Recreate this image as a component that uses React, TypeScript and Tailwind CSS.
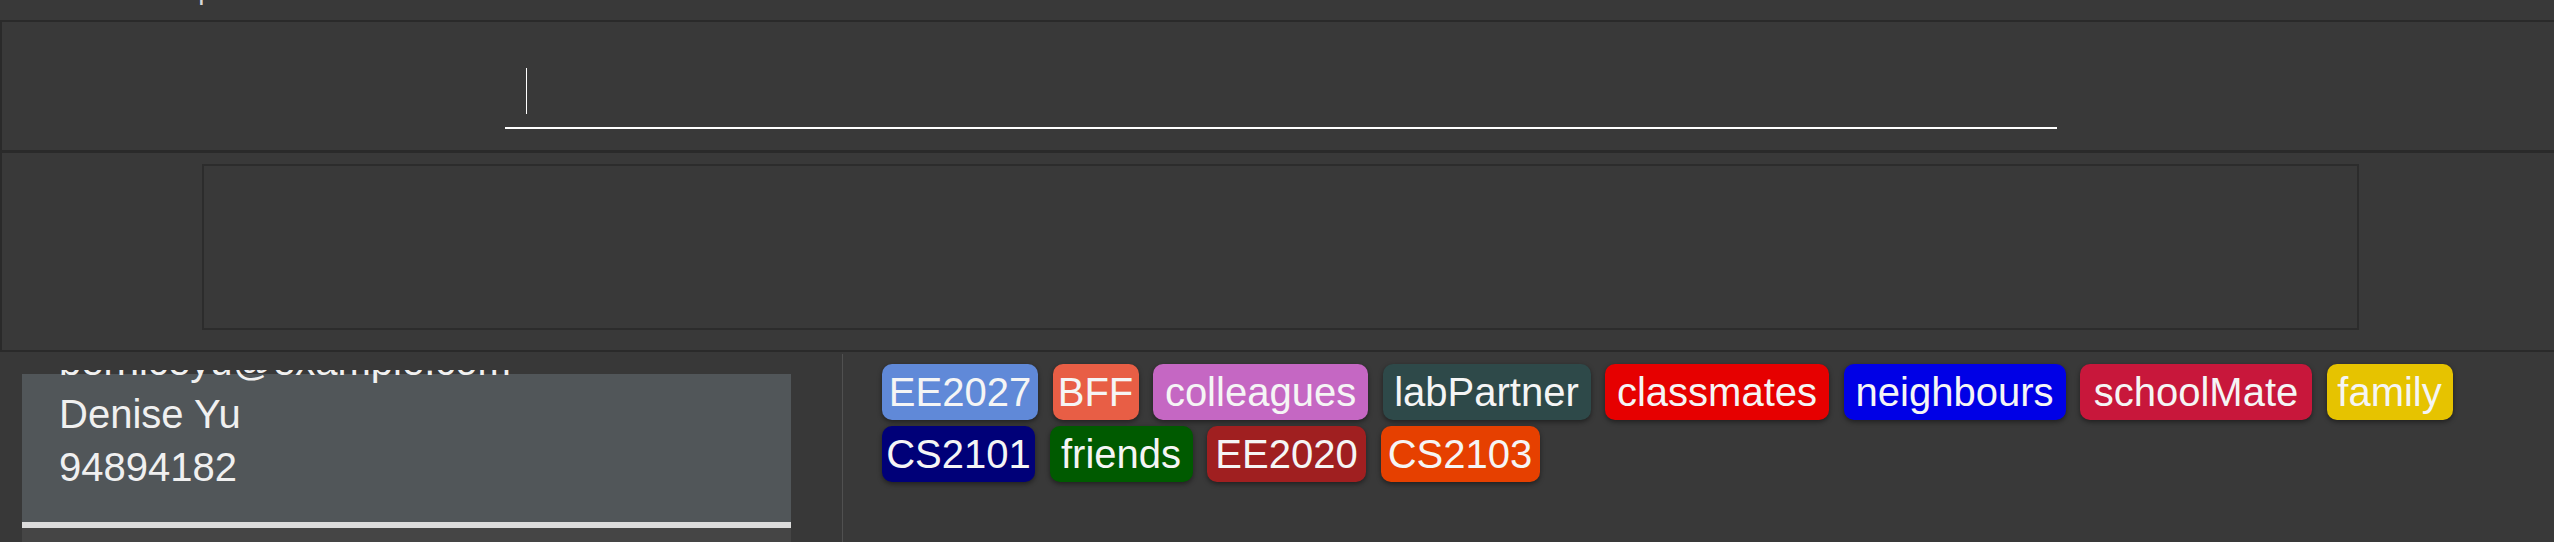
import React from 'react'

interface Tag {
  name: string
  className: string
}

const row1: Tag[] = [
  { name: 'EE2027', className: 'w-[156px] bg-[#6089d8]' },
  { name: 'BFF', className: 'w-[86px] bg-[#e85e45]' },
  { name: 'colleagues', className: 'w-[215px] bg-[#c567c3]' },
  { name: 'labPartner', className: 'w-[208px] bg-[#2e4949]' },
  { name: 'classmates', className: 'w-[224px] bg-[#e60000]' },
  { name: 'neighbours', className: 'w-[222px] bg-[#0000e6]' },
  { name: 'schoolMate', className: 'w-[232px] bg-[#c8173b]' },
  { name: 'family', className: 'w-[126px] bg-[#e6c300]' },
]

const row2: Tag[] = [
  { name: 'CS2101', className: 'w-[153px] bg-[#000078]' },
  { name: 'friends', className: 'w-[143px] bg-[#005a00]' },
  { name: 'EE2020', className: 'w-[159px] bg-[#a01f20]' },
  { name: 'CS2103', className: 'w-[159px] bg-[#e64000]' },
]

function TagChip({ tag }: { tag: Tag }) {
  return (
    <div
      className={`${tag.className} h-[56px] rounded-[10px] flex items-center justify-center text-[40px] leading-none text-[#f5f5f5] shadow-[0_2px_5px_rgba(0,0,0,0.45)]`}
    >
      {tag.name}
    </div>
  )
}

export default function App() {
  return (
    <div className="w-[2554px] h-[542px] bg-[#393939] flex flex-col overflow-hidden font-['Liberation_Sans',Arial,sans-serif]">
      {/* menu bar, scrolled mostly out of view */}
      <div className="h-[20px] overflow-hidden text-[28px] leading-[28px] text-[#d8d8d8]">
        <div className="-mt-[24px] flex">
          <span className="ml-[58px]">File</span>
          <span className="ml-[53px]">Help</span>
        </div>
      </div>
      <div className="h-[2px] bg-[#2a2a2a]" />

      {/* command box */}
      <div className="h-[128px] border-l-2 border-[#2a2a2a] pt-[46px] pl-[503px] flex flex-col">
        <div className="ml-[21px] w-[1px] h-[46px] bg-white" />
        <div className="mt-[13px] w-[1552px] h-[2px] bg-white" />
      </div>
      <div className="h-[3px] bg-[#2a2a2a]" />

      {/* result display */}
      <div className="h-[197px] border-l-2 border-[#2a2a2a] pt-[11px] pl-[200px]">
        <div className="w-[2157px] h-[166px] border-2 border-[#2c2c2c] bg-[#393939]" />
      </div>
      <div className="h-[2px] bg-[#2a2a2a]" />

      {/* person list + tags */}
      <div className="flex flex-1 min-h-0">
        <div className="w-[842px] bg-[#383838] pt-[18px] pl-[22px] flex flex-col">
          <div className="w-[769px] flex-1 overflow-hidden flex flex-col">
            <div className="mt-[4px] h-[148px] shrink-0 bg-[#515659] flex flex-col">
              <div className="-mt-[39px] pl-[37px] text-[40px] leading-[53px] text-[#f0f0f0]">
                <div>berniceyu@example.com</div>
                <div>Denise Yu</div>
                <div>94894182</div>
              </div>
            </div>
            <div className="h-[6px] shrink-0 bg-[#dcdcdc]" />
            <div className="h-[40px] shrink-0 bg-[#454545]" />
          </div>
        </div>
        <div className="w-[1px] mt-[2px] bg-[#505050]" />
        <div className="flex-1 pl-[39px] pt-[12px] flex flex-col gap-y-[6px]">
          <div className="flex gap-x-[14.5px]">
            {row1.map((t) => (
              <TagChip key={t.name} tag={t} />
            ))}
          </div>
          <div className="flex gap-x-[14.5px]">
            {row2.map((t) => (
              <TagChip key={t.name} tag={t} />
            ))}
          </div>
        </div>
      </div>
    </div>
  )
}
